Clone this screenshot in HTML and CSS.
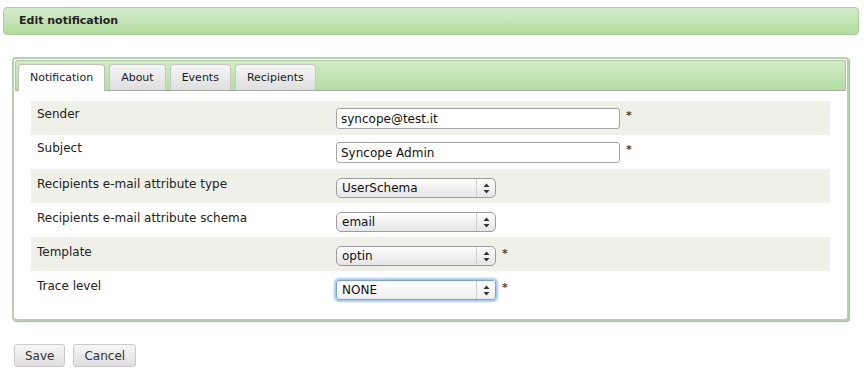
FILE: index.html
```html
<!DOCTYPE html>
<html lang="en">
<head>
    <meta charset="UTF-8">
    <title>Edit notification</title>
    <link rel="stylesheet" href="styles.css">
</head>
<body>
    <div class="title-bar">Edit notification</div>

    <div class="dialog">
        <div class="tab-header">
            <div class="tab active">Notification</div>
            <div class="tab">About</div>
            <div class="tab">Events</div>
            <div class="tab">Recipients</div>
        </div>

        <div class="tab-content">
            <div class="row shaded">
                <div class="label">Sender</div>
                <div class="field">
                    <input type="text" class="text-input" value="syncope@test.it">
                    <span class="required">*</span>
                </div>
            </div>
            <div class="row">
                <div class="label">Subject</div>
                <div class="field">
                    <input type="text" class="text-input" value="Syncope Admin">
                    <span class="required">*</span>
                </div>
            </div>
            <div class="row shaded select-row">
                <div class="label">Recipients e-mail attribute type</div>
                <div class="field">
                    <div class="select-box">
                        <select><option>UserSchema</option></select>
                        <div class="select-arrow">
                            <svg width="7" height="11" viewBox="0 0 7 11"><path d="M3.5 0.5 L6.5 4 L0.5 4 Z M3.5 10.5 L6.5 7 L0.5 7 Z" fill="#333"/></svg>
                        </div>
                    </div>
                </div>
            </div>
            <div class="row select-row">
                <div class="label">Recipients e-mail attribute schema</div>
                <div class="field">
                    <div class="select-box">
                        <select><option>email</option></select>
                        <div class="select-arrow">
                            <svg width="7" height="11" viewBox="0 0 7 11"><path d="M3.5 0.5 L6.5 4 L0.5 4 Z M3.5 10.5 L6.5 7 L0.5 7 Z" fill="#333"/></svg>
                        </div>
                    </div>
                </div>
            </div>
            <div class="row shaded select-row">
                <div class="label">Template</div>
                <div class="field">
                    <div class="select-box">
                        <select><option>optin</option></select>
                        <div class="select-arrow">
                            <svg width="7" height="11" viewBox="0 0 7 11"><path d="M3.5 0.5 L6.5 4 L0.5 4 Z M3.5 10.5 L6.5 7 L0.5 7 Z" fill="#333"/></svg>
                        </div>
                    </div>
                    <span class="required">*</span>
                </div>
            </div>
            <div class="row select-row">
                <div class="label">Trace level</div>
                <div class="field">
                    <div class="select-box focused">
                        <select><option>NONE</option></select>
                        <div class="select-arrow">
                            <svg width="7" height="11" viewBox="0 0 7 11"><path d="M3.5 0.5 L6.5 4 L0.5 4 Z M3.5 10.5 L6.5 7 L0.5 7 Z" fill="#333"/></svg>
                        </div>
                    </div>
                    <span class="required">*</span>
                </div>
            </div>
        </div>
    </div>

    <div class="buttons">
        <button type="button" class="button">Save</button>
        <button type="button" class="button">Cancel</button>
    </div>
</body>
</html>
```

FILE: styles.css
```css
* {
    margin: 0;
    padding: 0;
    box-sizing: border-box;
    font-family: 'DejaVu Sans', Verdana, sans-serif;
}

body {
    background-color: white;
    color: #222;
    padding: 7px 5px 0 3px;
}

.title-bar {
    height: 28px;
    border: 1px solid #a9d09a;
    border-radius: 4px;
    background: linear-gradient(#d6edcc, #b1dd9e);
    padding-left: 15px;
    font-size: 11px;
    font-weight: bold;
    line-height: 26px;
    color: #222;
}

.dialog {
    margin: 22px 10px 0 9px;
    border: 2px solid #b8cdb4;
    border-radius: 4px;
    padding: 1px;
    box-shadow: 1px 1px 1px #a8b3a5;
    background-color: white;
}

.tab-header {
    display: flex;
    gap: 4px;
    height: 31px;
    padding: 2px 2px 0 2px;
    border: 1px solid #a9c99c;
    border-bottom-color: #a8a8a8;
    border-radius: 3px 3px 0 0;
    background: linear-gradient(#d3ebc8, #b3dea1);
    align-items: flex-end;
}

.tab {
    height: 26px;
    padding: 0 11px;
    font-size: 11px;
    line-height: 25px;
    color: #1a1a1a;
    border: 1px solid #c6c6c6;
    border-bottom: none;
    border-radius: 4px 4px 0 0;
    background: linear-gradient(#f6f6f6, #dedede);
}

.tab.active {
    background: white;
    height: 27px;
    margin-bottom: -1px;
    border-color: #c0c0c0;
}

.tab-content {
    padding: 10px 16px 13px 16px;
}

.row {
    display: grid;
    grid-template-columns: 305px 1fr;
    height: 34px;
}

.row.shaded {
    background-color: #eff1e9;
}

.label {
    padding: 5px 0 0 6px;
    font-size: 12px;
    line-height: 16px;
}

.select-row .label {
    padding-top: 7px;
}

.field {
    display: flex;
    align-items: flex-start;
    padding-top: 7px;
}

.select-row .field {
    padding-top: 9px;
}

.text-input {
    width: 284px;
    height: 21px;
    border: 1px solid #a5a5a5;
    border-radius: 3px;
    padding: 0 4px;
    font-size: 12px;
    color: #111;
    background: white;
}

.required {
    margin-left: 6px;
    font-size: 11px;
    font-weight: bold;
    line-height: 16px;
    color: #444;
}

.select-box {
    display: flex;
    width: 160px;
    height: 20px;
    border: 1px solid #9c9c9c;
    border-radius: 5px;
    background: linear-gradient(#fdfdfd, #e6e6e6);
}

.select-box.focused {
    border-color: #7ba4d6;
    box-shadow: 0 0 2px 2px #a8c8ee;
    border-radius: 3px;
    background: linear-gradient(#ffffff, #eeeeee);
}

.select-box select {
    flex: 1;
    appearance: none;
    -webkit-appearance: none;
    border: none;
    background: transparent;
    padding-left: 5px;
    font-size: 12px;
    color: #111;
    outline: none;
}

.select-arrow {
    width: 19px;
    border-left: 1px solid #cfcfcf;
    display: flex;
    align-items: center;
    justify-content: center;
}

.buttons {
    display: flex;
    gap: 8px;
    margin: 23px 0 0 11px;
}

.button {
    height: 23px;
    padding: 0 10px;
    border: 1px solid #cacaca;
    border-radius: 3px;
    background: linear-gradient(#f6f6f6, #dfdfdf);
    font-size: 12px;
    color: #333;
}
```
